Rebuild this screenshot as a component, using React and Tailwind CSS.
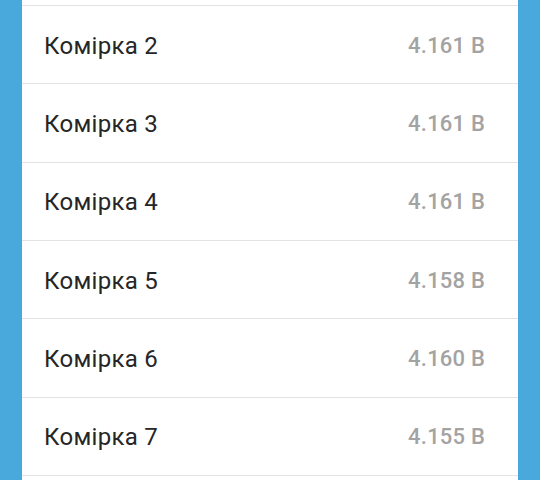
import React from "react";

const cells = [
  ["Комірка 1", "4.161 В"],
  ["Комірка 2", "4.161 В"],
  ["Комірка 3", "4.161 В"],
  ["Комірка 4", "4.161 В"],
  ["Комірка 5", "4.158 В"],
  ["Комірка 6", "4.160 В"],
  ["Комірка 7", "4.155 В"],
  ["Комірка 8", "4.160 В"],
];

export default function App() {
  return (
    <div
      className="w-[540px] h-[480px] overflow-hidden bg-[#4aa9dc] px-[22px]"
      style={{ fontFamily: "Roboto, 'Noto Sans', sans-serif" }}
    >
      <div className="bg-white -mt-[72.33px]">
        {cells.map(([label, value]) => (
          <div
            key={label}
            className="h-[78.33px] border-b border-[#e3e3e3] flex items-center justify-between pl-[22px] pr-[33px] pt-[2px]"
          >
            <span className="text-[24px] text-[#262626] leading-none tracking-[0.3px]">{label}</span>
            <span className="text-[22px] font-medium text-[#a3a3a3] leading-none tracking-[0.2px]">{value}</span>
          </div>
        ))}
      </div>
    </div>
  );
}
